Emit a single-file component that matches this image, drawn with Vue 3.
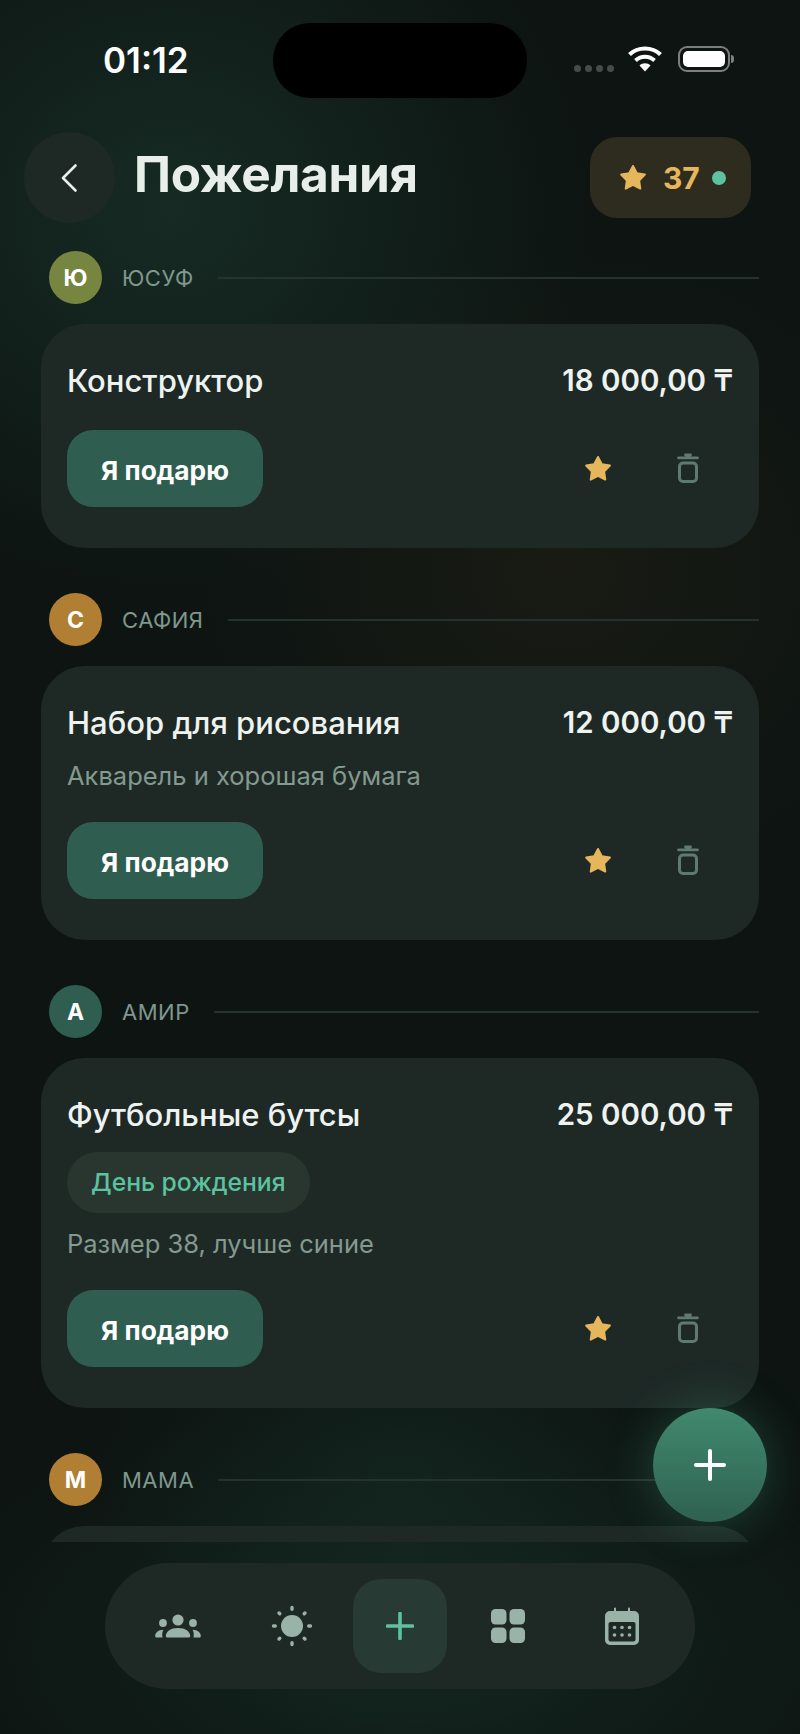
<template>
  <div class="screen">
    <div class="status">
      <span class="time">01:12</span>
      <div class="island"></div>
      <div class="status-icons">
        <div class="dots"><i v-for="n in 4" :key="n"></i></div>
        <svg class="wifi" width="34" height="26" viewBox="0 0 34 26">
          <path d="M1.5 8.5C10 .5 24 .5 32.5 8.5" fill="none" stroke="#fff" stroke-width="4.2" />
          <path d="M7.5 14.5C13 9.5 21 9.5 26.5 14.5" fill="none" stroke="#fff" stroke-width="4" />
          <path d="M11.5 19.5C14.5 16.6 19.5 16.6 22.5 19.5L17 25.5Z" fill="#fff" />
        </svg>
        <div class="battery"><div class="battery-fill"></div></div>
        <div class="battery-cap"></div>
      </div>
    </div>

    <header class="header">
      <div class="back">
        <svg width="20" height="30" viewBox="0 0 20 30">
          <path d="M15.500 2.500L3 15l12.500 12.500" fill="none" stroke="#e8efeb" stroke-width="2.600" stroke-linecap="round" stroke-linejoin="round" />
        </svg>
      </div>
      <h1 class="title">Пожелания</h1>
      <div class="balance">
        <svg width="28" height="27" viewBox="0 0 28 27"><path :d="starPath" fill="#e6b65c" stroke="#e6b65c" stroke-width="2" stroke-linejoin="round" /></svg>
        <span class="balance-num">37</span>
        <i class="balance-dot"></i>
      </div>
    </header>

    <main class="list">
      <section v-for="s in sections" :key="s.name" class="section">
        <div class="person">
          <div class="avatar" :class="s.tone">{{ s.letter }}</div>
          <span class="person-name">{{ s.name }}</span>
          <div class="person-line"></div>
        </div>
        <article class="card" :class="{ stub: !s.title }">
          <template v-if="s.title">
            <div class="card-top">
              <span class="card-title">{{ s.title }}</span>
              <span class="card-price">{{ s.price }}</span>
            </div>
            <div v-if="s.chip" class="chip">{{ s.chip }}</div>
            <p v-if="s.note" class="note">{{ s.note }}</p>
            <div class="card-bottom">
              <button class="give">Я подарю</button>
              <div class="actions">
                <svg width="28" height="27" viewBox="0 0 28 27"><path :d="starPath" fill="#e6b65c" stroke="#e6b65c" stroke-width="2" stroke-linejoin="round" /></svg>
                <svg class="trash" width="22" height="30" viewBox="0 0 22 30">
                  <path d="M8.500 2h5M1.500 4.800h19" fill="none" stroke="#5f7a70" stroke-width="2.800" stroke-linecap="round" />
                  <rect x="2.500" y="10" width="17" height="18.500" rx="3.500" fill="none" stroke="#5f7a70" stroke-width="3" />
                </svg>
              </div>
            </div>
          </template>
        </article>
      </section>
    </main>

    <button class="fab">
      <svg width="32" height="32" viewBox="0 0 32 32"><path d="M16 2v28M2 16h28" stroke="#fff" stroke-width="4" stroke-linecap="round" /></svg>
    </button>

    <nav class="nav">
      <div class="nav-item side-left">
        <svg width="46" height="24" viewBox="0 0 46 24" fill="#9ab3a8">
          <circle cx="23" cy="6" r="5.600" />
          <circle cx="8" cy="9" r="3.900" />
          <circle cx="38" cy="9" r="3.900" />
          <path d="M12 23.500c-.8 0-1.200-.5-1.200-1.200 0-5 5-8.300 12.200-8.300s12.200 3.300 12.200 8.300c0 .7-.4 1.200-1.200 1.200Z" />
          <path d="M7.500 23.500H1.800C.7 23.500.2 23 .2 22c0-3 2.700-6.200 8.300-6.200-1.200 1.800-1.600 4.500-1 7.700Z" />
          <path d="M38.500 23.500h5.700c1.100 0 1.600-.5 1.600-1.500 0-3-2.700-6.200-8.300-6.200 1.200 1.800 1.600 4.500 1 7.700Z" />
        </svg>
      </div>
      <div class="nav-item">
        <svg width="42" height="42" viewBox="0 0 42 42" fill="#9ab3a8">
          <circle cx="21" cy="21" r="11" />
          <g stroke="#9ab3a8" stroke-width="3.400" stroke-linecap="round">
            <path d="M21 2.500v1.800M21 37.700v1.800M2.500 21h1.800M37.700 21h1.800M8 8l.8.8M33.200 33.200l.8.8M34 8l-.8.8M8.800 33.200l-.8.8" />
          </g>
        </svg>
      </div>
      <div class="nav-item active">
        <svg width="28" height="28" viewBox="0 0 28 28"><path d="M14 1.500v25M1.500 14h25" stroke="#5cc2a0" stroke-width="3.600" stroke-linecap="round" /></svg>
      </div>
      <div class="nav-item">
        <svg width="34" height="34" viewBox="0 0 34 34" fill="#9ab3a8">
          <rect width="15.500" height="15.500" rx="4.500" />
          <rect x="18.500" width="15.500" height="15.500" rx="4.500" />
          <rect y="18.500" width="15.500" height="15.500" rx="4.500" />
          <rect x="18.500" y="18.500" width="15.500" height="15.500" rx="4.500" />
        </svg>
      </div>
      <div class="nav-item side-right">
        <svg width="34" height="38" viewBox="0 0 34 38">
          <path d="M5 4h4V1.500a1 1 0 0 1 2 0V4h12V1.500a1 1 0 0 1 2 0V4h4a5 5 0 0 1 5 5v24a5 5 0 0 1-5 5H5a5 5 0 0 1-5-5V9a5 5 0 0 1 5-5Z" fill="#9ab3a8" />
          <rect x="3.500" y="15" width="27" height="19.500" rx="2" fill="#1e2926" />
          <g fill="#9ab3a8">
            <circle cx="9.500" cy="20.500" r="1.800" /><circle cx="17" cy="20.500" r="1.800" /><circle cx="24.500" cy="20.500" r="1.800" />
            <circle cx="9.500" cy="28" r="1.800" /><circle cx="17" cy="28" r="1.800" /><circle cx="24.500" cy="28" r="1.800" />
          </g>
        </svg>
      </div>
    </nav>
  </div>
</template>

<script setup>
const starPath = 'M14 2L17.800 9.300 25.900 10.600 20.100 16.500 21.300 24.600 14 20.900 6.700 24.600 7.900 16.500 2.100 10.600 10.200 9.300Z'

const sections = [
  { name: 'ЮСУФ', letter: 'Ю', tone: 'olive', title: 'Конструктор', price: '18 000,00 ₸' },
  { name: 'САФИЯ', letter: 'С', tone: 'amber', title: 'Набор для рисования', price: '12 000,00 ₸', note: 'Акварель и хорошая бумага' },
  { name: 'АМИР', letter: 'А', tone: 'green', title: 'Футбольные бутсы', price: '25 000,00 ₸', chip: 'День рождения', note: 'Размер 38, лучше синие' },
  { name: 'МАМА', letter: 'М', tone: 'amber' }
]
</script>

<style>
html, body {
  margin: 0;
  background: #0d1412;
}
</style>

<style scoped>
.screen {
  position: relative;
  width: 800px;
  height: 1734px;
  overflow: hidden;
  font-family: Inter, "Noto Sans", sans-serif;
  color: #e8efeb;
  background:
    radial-gradient(420px 380px at 170px 210px, rgba(30, 62, 50, .55), transparent 100%),
    radial-gradient(360px 320px at 560px 570px, rgba(56, 46, 24, .28), transparent 100%),
    radial-gradient(520px 260px at 420px 1650px, rgba(24, 52, 42, .5), transparent 100%),
    radial-gradient(300px 300px at 400px 1480px, rgba(24, 50, 40, .4), transparent 100%),
    #0d1412;
}
.status {
  display: grid;
  grid-template-columns: 273px 254px 273px;
  height: 132px;
  box-sizing: border-box;
  padding-top: 23px;
}
.time {
  justify-self: start;
  margin: 17px 0 0 103px;
  font-size: 35px;
  line-height: 40px;
  font-weight: 600;
  color: #fff;
}
.island {
  height: 75px;
  background: #000;
  border-radius: 37px;
}
.status-icons {
  display: flex;
  align-items: flex-start;
  padding: 23px 0 0 47px;
}
.dots {
  display: flex;
  gap: 4px;
  margin: 19px 14px 0 0;
}
.dots i {
  width: 7px;
  height: 7px;
  border-radius: 50%;
  background: #454c4a;
}
.wifi {
  margin-right: 16px;
}
.battery {
  box-sizing: border-box;
  width: 52px;
  height: 26px;
  padding: 3px;
  border: 2px solid #7b807e;
  border-radius: 9px;
}
.battery-fill {
  height: 100%;
  background: #fff;
  border-radius: 5px;
}
.battery-cap {
  width: 3px;
  height: 8px;
  margin: 9px 0 0 1px;
  background: #7b807e;
  border-radius: 0 3px 3px 0;
}
.header {
  display: flex;
  align-items: center;
  height: 91px;
  padding: 0 49px 0 24px;
}
.back {
  display: flex;
  align-items: center;
  justify-content: center;
  width: 91px;
  height: 91px;
  border-radius: 50%;
  background: #1e2825;
}
.title {
  margin: -7px 0 0 19px;
  flex: 1;
  font-size: 49.500px;
  line-height: 56px;
  font-weight: 700;
  letter-spacing: -.3px;
  color: #e8efeb;
}
.balance {
  display: flex;
  align-items: center;
  width: 161px;
  height: 81px;
  box-sizing: border-box;
  padding-left: 29px;
  border-radius: 27px;
  background: #2e2b1f;
}
.balance-num {
  margin-left: 16px;
  font-size: 30px;
  font-weight: 700;
  color: #e6b65c;
}
.balance-dot {
  width: 14px;
  height: 14px;
  margin-left: 12px;
  border-radius: 50%;
  background: #5cc2a0;
}
.list {
  height: 1313px;
  margin-top: 6px;
  padding: 22px 41px 0;
  overflow: hidden;
  box-sizing: border-box;
}
.section {
  margin-bottom: 45px;
}
.person {
  display: flex;
  align-items: center;
  padding-left: 8px;
  margin-bottom: 20px;
}
.avatar {
  display: flex;
  align-items: center;
  justify-content: center;
  width: 53px;
  height: 53px;
  flex: none;
  border-radius: 50%;
  font-size: 23px;
  font-weight: 700;
  color: #fff;
}
.olive { background: #768540; }
.amber { background: #b07f33; }
.green { background: #2f5d4f; }
.person-name {
  margin-left: 20px;
  font-size: 22px;
  letter-spacing: .5px;
  color: #7f978d;
}
.person-line {
  flex: 1;
  height: 2px;
  margin-left: 24px;
  background: #25332f;
}
.card {
  padding: 36px 26px 41px;
  border-radius: 44px;
  background: #1e2926;
}
.stub {
  height: 120px;
  padding: 0;
}
.card-top {
  display: flex;
  justify-content: space-between;
  align-items: center;
  height: 40px;
}
.card-title {
  font-size: 31px;
  font-weight: 500;
  color: #eef3f0;
}
.card-price {
  font-size: 29.500px;
  font-weight: 600;
  color: #eef3f0;
}
.chip {
  width: fit-content;
  margin-top: 18px;
  padding: 0 24px;
  height: 61px;
  line-height: 61px;
  border-radius: 31px;
  background: #28362f;
  font-size: 24.700px;
  font-weight: 500;
  color: #5cc2a0;
}
.note {
  margin: 18px 0 0;
  font-size: 25.500px;
  line-height: 32px;
  color: #84998f;
}
.chip + .note {
  margin-top: 15px;
}
.card-bottom {
  display: flex;
  align-items: center;
  justify-content: space-between;
  margin-top: 30px;
}
.give {
  width: 196px;
  height: 77px;
  padding: 3px 0 0;
  border: none;
  border-radius: 26px;
  background: #2f5d4f;
  font-family: inherit;
  font-size: 26.300px;
  font-weight: 700;
  color: #fff;
}
.actions {
  display: flex;
  align-items: center;
  gap: 65px;
  margin-right: 34px;
}
.trash {
  margin-top: -2px;
}
.fab {
  position: absolute;
  left: 653px;
  top: 1408px;
  display: flex;
  align-items: center;
  justify-content: center;
  width: 114px;
  height: 114px;
  padding: 0;
  border: none;
  border-radius: 50%;
  background: linear-gradient(#40896f, #2f6150);
  box-shadow: 0 0 48px rgba(72, 170, 135, .32);
}
.nav {
  position: absolute;
  left: 105px;
  top: 1563px;
  display: flex;
  align-items: center;
  justify-content: center;
  gap: 14px;
  width: 590px;
  height: 126px;
  border-radius: 63px;
  background: #1e2926;
}
.nav-item {
  display: flex;
  align-items: center;
  justify-content: center;
  width: 94px;
  height: 94px;
}
.side-left { margin-right: 6px; }
.side-right { margin-left: 6px; }
.active {
  border-radius: 28px;
  background: #283a34;
}
</style>
